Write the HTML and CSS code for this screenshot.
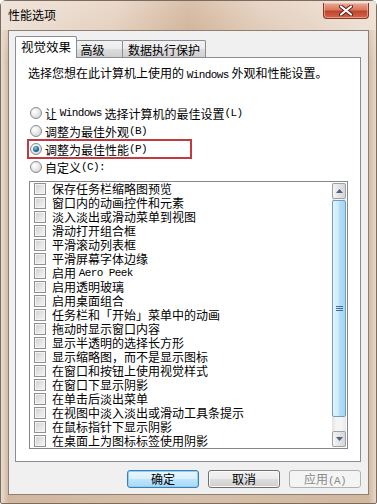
FILE: index.html
```html
<!DOCTYPE html>
<html lang="zh-CN">
<head>
    <meta charset="UTF-8">
    <meta name="viewport" content="width=device-width, initial-scale=1.0">
    <title>性能选项</title>
    <link rel="stylesheet" href="styles.css">
</head>
<body>
    <div class="window">
        <div class="titlebar">
            <span class="title">性能选项</span>
            <span class="close">
                <svg width="14" height="11" viewBox="0 0 14 11">
                    <path d="M2 1.5 L12 9.5 M12 1.5 L2 9.5" stroke="#5a1f16" stroke-width="4" stroke-linecap="round"/>
                    <path d="M2 1.5 L12 9.5 M12 1.5 L2 9.5" stroke="#fff" stroke-width="2.2" stroke-linecap="round"/>
                </svg>
            </span>
        </div>

        <div class="client">
            <div class="tabs">
                <div class="tab active">视觉效果</div>
                <div class="tab">高级</div>
                <div class="tab">数据执行保护</div>
            </div>

            <div class="page">
                <p class="intro">选择您想在此计算机上使用的 <span class="lat">Windows</span> 外观和性能设置。</p>

                <div class="radios">
                    <div class="radio"><span class="dot"></span>让 <span class="lat">Windows</span> 选择计算机的最佳设置<span class="lat">(L)</span></div>
                    <div class="radio"><span class="dot"></span>调整为最佳外观<span class="lat">(B)</span></div>
                    <div class="radio marked"><span class="dot checked"></span>调整为最佳性能<span class="lat">(P)</span></div>
                    <div class="radio"><span class="dot"></span>自定义<span class="lat">(C):</span></div>
                </div>

                <div class="listbox">
                    <ul class="items">
                        <li><span class="box"></span>保存任务栏缩略图预览</li>
                        <li><span class="box"></span>窗口内的动画控件和元素</li>
                        <li><span class="box"></span>淡入淡出或滑动菜单到视图</li>
                        <li><span class="box"></span>滑动打开组合框</li>
                        <li><span class="box"></span>平滑滚动列表框</li>
                        <li><span class="box"></span>平滑屏幕字体边缘</li>
                        <li><span class="box"></span>启用 <span class="lat">Aero Peek</span></li>
                        <li><span class="box"></span>启用透明玻璃</li>
                        <li><span class="box"></span>启用桌面组合</li>
                        <li><span class="box"></span>任务栏和「开始」菜单中的动画</li>
                        <li><span class="box"></span>拖动时显示窗口内容</li>
                        <li><span class="box"></span>显示半透明的选择长方形</li>
                        <li><span class="box"></span>显示缩略图，而不是显示图标</li>
                        <li><span class="box"></span>在窗口和按钮上使用视觉样式</li>
                        <li><span class="box"></span>在窗口下显示阴影</li>
                        <li><span class="box"></span>在单击后淡出菜单</li>
                        <li><span class="box"></span>在视图中淡入淡出或滑动工具条提示</li>
                        <li><span class="box"></span>在鼠标指针下显示阴影</li>
                        <li><span class="box"></span>在桌面上为图标标签使用阴影</li>
                    </ul>
                    <div class="scrollbar">
                        <div class="arrow">
                            <svg width="7" height="4" viewBox="0 0 7 4"><path d="M0 4 L3.5 0 L7 4 Z" fill="#4d6185"/></svg>
                        </div>
                        <div class="thumb">
                            <svg width="7" height="7" viewBox="0 0 7 7"><path d="M0 1.5 H7 M0 3.5 H7 M0 5.5 H7" stroke="#3e6d95" stroke-width="1"/></svg>
                        </div>
                        <div class="track"></div>
                        <div class="arrow">
                            <svg width="7" height="4" viewBox="0 0 7 4"><path d="M0 0 L3.5 4 L7 0 Z" fill="#4d6185"/></svg>
                        </div>
                    </div>
                </div>
            </div>

            <div class="buttons">
                <button class="btn default">确定</button>
                <button class="btn">取消</button>
                <button class="btn" disabled>应用<span class="lat">(A)</span></button>
            </div>
        </div>
    </div>
</body>
</html>
```

FILE: styles.css
```css
html, body {
    margin: 0;
    padding: 0;
}
body {
    width: 377px;
    height: 504px;
    overflow: hidden;
    font-family: "Noto Sans CJK SC", sans-serif;
    font-size: 12px;
    color: #000;
    background: #fff;
}
.lat {
    font-family: "Liberation Mono", monospace;
    font-size: 11px;
    letter-spacing: -0.6px;
}
.window {
    width: 377px;
    height: 504px;
    box-sizing: border-box;
    display: flex;
    flex-direction: column;
    border: 1px solid #7b6c60;
    border-radius: 6px 6px 2px 2px;
    background:
        linear-gradient(to bottom, rgba(245, 236, 228, 0.9) 0px, rgba(236, 222, 210, 0.5) 30px, rgba(236, 222, 210, 0) 60px),
        linear-gradient(to right, #e9ddd2 0%, #d2b79f 2%, #d6bfa9 50%, #d2b79f 98%, #e6d8cb 100%);
}
.titlebar {
    height: 29px;
    display: flex;
    align-items: flex-start;
    padding-left: 7px;
    background: linear-gradient(to right, rgba(239, 228, 218, 0.9) 0%, rgba(230, 210, 193, 0.6) 30%, rgba(199, 160, 128, 0.55) 50%, rgba(226, 204, 186, 0.6) 70%, rgba(239, 228, 218, 0.9) 100%);
}
.title {
    line-height: 28px;
    font-size: 12px;
}
.close {
    margin-left: auto;
    margin-right: 7px;
    margin-top: 2px;
    width: 46px;
    height: 16px;
    box-sizing: border-box;
    display: flex;
    align-items: center;
    justify-content: center;
    border: 1px solid #7e3a2c;
    border-top: none;
    border-radius: 0 0 4px 4px;
    background: linear-gradient(to bottom, #eba895 0%, #d8785f 45%, #c0452d 55%, #d4654a 100%);
    box-shadow: inset 0 0 0 1px rgba(255, 210, 195, 0.5);
}
.client {
    flex: 1;
    margin: 0 7px 8px 7px;
    display: flex;
    flex-direction: column;
    padding: 5px 7px 6px 6px;
    background: #f0f0f0;
    border: 1px solid #8d7f72;
}
.tabs {
    display: flex;
    align-items: flex-end;
    margin-bottom: -1px;
    position: relative;
    z-index: 1;
}
.tab {
    height: 17px;
    margin-bottom: 1px;
    box-sizing: border-box;
    padding-top: 1px;
    text-align: center;
    line-height: 16px;
    border: 1px solid #898c95;
    border-bottom: none;
    border-radius: 2px 2px 0 0;
    background: linear-gradient(to bottom, #f2f2f2 0%, #ebebeb 50%, #dddddd 50%, #cfcfcf 100%);
}
.tab.active {
    width: 62px;
    height: 22px;
    margin-bottom: 0;
    padding-top: 2px;
    background: #fff;
    font-size: 12.5px;
}
.tab:nth-child(2) {
    width: 47px;
    margin-left: -1px;
    padding-right: 14px;
}
.tab:nth-child(3) {
    width: 84px;
    margin-left: -1px;
}
.page {
    flex: 1;
    background: #fff;
    border: 1px solid #898c95;
    padding: 7px 0 0 12px;
}
.intro {
    margin: 0;
    line-height: 16px;
}
.radios {
    margin-top: 21px;
}
.radio {
    height: 18px;
    display: flex;
    align-items: center;
    padding-left: 2px;
    white-space: pre;
}
.radio.marked {
    width: 161px;
    box-shadow: 0 0 0 1px #c23a3e, inset 0 0 0 1px #c23a3e;
}
.dot {
    width: 12px;
    height: 12px;
    box-sizing: border-box;
    margin-right: 3px;
    border-radius: 50%;
    border: 1px solid #8a8a8a;
    background: radial-gradient(circle at 35% 35%, #ffffff 0%, #eaeaea 45%, #c9c9c9 100%);
    display: flex;
    align-items: center;
    justify-content: center;
}
.dot.checked::after {
    content: "";
    width: 6px;
    height: 6px;
    border-radius: 50%;
    background: radial-gradient(circle at 40% 35%, #8fd0f5 0%, #2c73a5 45%, #123e62 100%);
}
.listbox {
    margin: 5px 0 0 1px;
    width: 319px;
    height: 268px;
    box-sizing: border-box;
    border: 1px solid #828790;
    background: #fff;
    display: flex;
}
.items {
    flex: 1;
    list-style: none;
    margin: 0;
    padding: 0;
}
.items li {
    height: 14px;
    display: flex;
    align-items: center;
    white-space: pre;
    line-height: 14px;
}
.box {
    width: 12px;
    height: 12px;
    box-sizing: border-box;
    margin: 0 6px 0 4px;
    border: 1px solid #8f8f8f;
    background: linear-gradient(135deg, #cfcfcf 0%, #e4e4e4 50%, #f5f5f5 100%);
    box-shadow: inset 0 0 0 1px #f4f4f4;
}
.scrollbar {
    width: 14px;
    margin: 1px 1px 1px 0;
    display: flex;
    flex-direction: column;
    background: linear-gradient(to right, #e3e3e3, #f4f4f4 30%, #f4f4f4 70%, #e8e8e8);
}
.arrow {
    height: 16px;
    box-sizing: border-box;
    border: 1px solid #a0a0a0;
    border-radius: 2px;
    background: linear-gradient(to right, #f6f6f6, #e4e4e4 50%, #d6d6d6);
    display: flex;
    align-items: center;
    justify-content: center;
}
.thumb {
    height: 217px;
    margin-top: 1px;
    box-sizing: border-box;
    border: 1px solid #6a9ec4;
    border-radius: 2px;
    background: linear-gradient(to right, #e3f4fc 0%, #cdebfb 45%, #b4def7 55%, #a5d6f3 100%);
    display: flex;
    align-items: center;
    justify-content: center;
}
.track {
    flex: 1;
}
.buttons {
    margin-top: 8px;
    display: flex;
    justify-content: flex-end;
    gap: 9px;
}
.btn {
    width: 72px;
    height: 18px;
    padding: 0;
    font-family: "Noto Sans CJK SC", sans-serif;
    font-size: 12px;
    line-height: 16px;
    color: #000;
    border: 1px solid #707070;
    border-radius: 3px;
    background: linear-gradient(to bottom, #f2f2f2 0%, #ebebeb 50%, #dddddd 50%, #cfcfcf 100%);
    box-shadow: inset 0 0 0 1px rgba(255, 255, 255, 0.8);
}
.btn.default {
    border-color: #3c7fb1;
    background: linear-gradient(to bottom, #eaf6fd 0%, #d9f0fc 50%, #bee6fd 50%, #a7d9f5 100%);
    box-shadow: inset 0 0 0 1px #8fd0f5;
}
.btn:disabled {
    color: #8a8a8a;
    border-color: #adb2b5;
    background: #f4f4f4;
    box-shadow: none;
}
```
